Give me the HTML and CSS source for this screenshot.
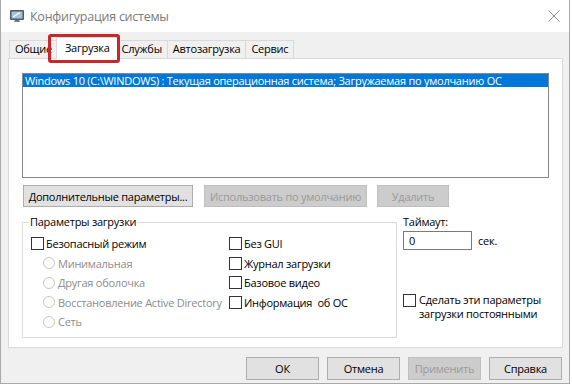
FILE: index.html
```html
<!DOCTYPE html>
<html lang="ru">
<head>
    <meta charset="UTF-8" />
    <title>Конфигурация системы</title>
    <link rel="stylesheet" href="styles.css">
</head>
<body>
    <div class="window">
        <header class="titlebar">
            <svg class="title-icon" viewBox="0 0 16 16" width="16" height="16">
                <rect x="1" y="2" width="14" height="10" rx="1" fill="#4d5b69"/>
                <rect x="2.5" y="3.5" width="11" height="7" fill="#a9c0d6"/>
                <path d="M4 9 L11 4.5" stroke="#fff" stroke-width="1.2"/>
                <path d="M6 12 L5 14 H11 L10 12 Z" fill="#6b7783"/>
            </svg>
            <span class="title">Конфигурация системы</span>
            <svg class="close" viewBox="0 0 12 12" width="12" height="12">
                <path d="M0.5 0.5 L11.5 11.5 M11.5 0.5 L0.5 11.5" stroke="#8a8a8a" stroke-width="1"/>
            </svg>
        </header>

        <div class="content">
            <nav class="tabs">
                <span class="tab">Общие</span>
                <span class="tab active">Загрузка</span>
                <span class="tab">Службы</span>
                <span class="tab">Автозагрузка</span>
                <span class="tab">Сервис</span>
            </nav>

            <section class="panel">
                <div class="listbox">
                    <div class="list-item selected">Windows 10 (C:\WINDOWS) : Текущая операционная система; Загружаемая по умолчанию ОС</div>
                </div>

                <div class="list-buttons">
                    <button class="btn btn-advanced">Дополнительные параметры...</button>
                    <button class="btn btn-default disabled">Использовать по умолчанию</button>
                    <button class="btn btn-delete disabled">Удалить</button>
                </div>

                <div class="options">
                    <fieldset class="group">
                        <legend>Параметры загрузки</legend>
                        <div class="group-cols">
                            <div class="col col-left">
                                <div class="row"><span class="check"></span>Безопасный режим</div>
                                <div class="row muted"><span class="radio"></span>Минимальная</div>
                                <div class="row muted"><span class="radio"></span>Другая оболочка</div>
                                <div class="row muted"><span class="radio"></span>Восстановление Active Directory</div>
                                <div class="row muted"><span class="radio"></span>Сеть</div>
                            </div>
                            <div class="col col-right">
                                <div class="row"><span class="check"></span>Без GUI</div>
                                <div class="row"><span class="check"></span>Журнал загрузки</div>
                                <div class="row"><span class="check"></span>Базовое видео</div>
                                <div class="row"><span class="check"></span>Информация&nbsp; об ОС</div>
                            </div>
                        </div>
                    </fieldset>

                    <div class="side">
                        <div class="side-label">Таймаут:</div>
                        <div class="timeout">
                            <span class="textbox">0</span>
                            <span class="unit">сек.</span>
                        </div>
                        <div class="persist">
                            <span class="check"></span>
                            <span class="persist-text">Сделать эти параметры<br>загрузки постоянными</span>
                        </div>
                    </div>
                </div>
            </section>

            <div class="dialog-buttons">
                <button class="btn btn-dialog">ОК</button>
                <button class="btn btn-dialog">Отмена</button>
                <button class="btn btn-dialog disabled">Применить</button>
                <button class="btn btn-dialog">Справка</button>
            </div>
        </div>

        <div class="highlight"></div>
    </div>
</body>
</html>
```

FILE: styles.css
```css
body {
    margin: 0;
    background-color: #fff;
    font-family: 'Open Sans', 'Noto Sans', sans-serif;
    font-size: 11px;
    letter-spacing: -0.25px;
    color: #000;
}
.window {
    position: relative;
    width: 570px;
    height: 384px;
    box-sizing: border-box;
    border: 1px solid #a9a9a9;
    border-top: none;
    background-color: #f0f0f0;
}
.titlebar {
    display: flex;
    align-items: center;
    height: 32px;
    background-color: #fff;
    padding-left: 8px;
}
.title-icon { margin-right: 5px; }
.title { font-size: 12.5px; color: #7a7a7a; }
.close { margin-left: auto; margin-right: 9px; }

.content { padding: 5px 0 0 7px; }

.tabs {
    display: flex;
    align-items: flex-end;
    height: 21px;
    padding-left: 2px;
    position: relative;
    z-index: 2;
}
.tab {
    height: 18px;
    box-sizing: border-box;
    line-height: 16px;
    padding: 0 5px;
    border: 1px solid #d9d9d9;
    border-bottom: none;
    background-color: #f0f0f0;
    margin-left: -1px;
}
.tab.active {
    height: 22px;
    margin: 0 -2px -1px -2px;
    padding: 0 8px;
    line-height: 20px;
    background-color: #fff;
    position: relative;
}

.panel {
    width: 555px;
    height: 290px;
    box-sizing: border-box;
    border: 1px solid #d9d9d9;
    background-color: #fff;
    padding: 14px 13px 0 13px;
}
.listbox {
    height: 105px;
    box-sizing: border-box;
    border: 1px solid #828790;
}
.list-item {
    height: 13px;
    line-height: 13px;
    padding-left: 2px;
    white-space: nowrap;
}
.list-item.selected { background-color: #0078d7; color: #fff; }

.list-buttons {
    display: flex;
    gap: 10px;
    margin-top: 7px;
    padding-left: 1px;
}
.btn {
    height: 22px;
    box-sizing: border-box;
    border: 1px solid #adadad;
    background-color: #e1e1e1;
    font: inherit;
    letter-spacing: inherit;
    color: #000;
    padding: 0;
    white-space: nowrap;
}
.btn.disabled { background-color: #cccccc; border-color: #bfbfbf; color: #9a9a9a; }
.btn-advanced { width: 170px; margin-right: 1px; }
.btn-default { width: 163px; }
.btn-delete { width: 72px; }

.options { display: flex; margin-top: 7px; }
.group {
    margin: 0;
    width: 375px;
    height: 124px;
    box-sizing: border-box;
    border: 1px solid #dcdcdc;
    padding: 0 0 0 8px;
}
.group legend {
    line-height: 16px;
    padding: 0 1px;
    margin-left: -2px;
}
.group-cols { display: flex; padding-top: 4px; }
.col-left { width: 198px; }
.row {
    display: flex;
    align-items: center;
    height: 19.5px;
    white-space: nowrap;
}
.row.muted { color: #8c8c8c; }
.check {
    width: 13px;
    height: 13px;
    box-sizing: border-box;
    border: 1px solid #333;
    background-color: #fff;
    margin-right: 2px;
    flex-shrink: 0;
}
.radio {
    width: 12px;
    height: 12px;
    box-sizing: border-box;
    border: 1px solid #c8c8c8;
    border-radius: 50%;
    margin: 0 3px 0 12px;
    flex-shrink: 0;
}

.side { margin-left: 6px; display: flex; flex-direction: column; }
.side-label { line-height: 16px; }
.timeout { display: flex; align-items: center; margin-top: 1px; }
.textbox {
    width: 69px;
    height: 19px;
    box-sizing: border-box;
    border: 1px solid #7a7a7a;
    padding-left: 5px;
    line-height: 17px;
}
.unit { margin-left: 6px; }
.persist { display: flex; align-items: flex-start; margin-top: 43px; }
.persist .check { margin: 1px 3px 0 0; }
.persist-text { line-height: 14px; white-space: nowrap; }

.dialog-buttons {
    display: flex;
    justify-content: flex-end;
    gap: 8px;
    width: 555px;
    margin-top: 9px;
}
.btn-dialog { width: 73px; height: 23px; }
.dialog-buttons .btn-dialog:last-child { margin-right: 1px; }

.highlight {
    position: absolute;
    left: 47px;
    top: 34px;
    width: 72px;
    height: 29px;
    box-sizing: border-box;
    border: 3px solid #c6282b;
    border-radius: 3px;
    z-index: 5;
}
```
